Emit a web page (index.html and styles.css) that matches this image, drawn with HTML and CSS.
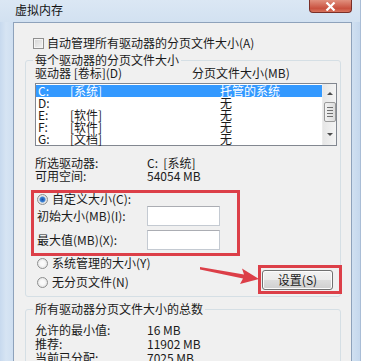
FILE: index.html
```html
<!DOCTYPE html>
<html lang="zh-CN">
<head>
	<meta charset="UTF-8">
	<title>虚拟内存</title>
	<link rel="stylesheet" href="styles.css">
</head>
<body>
	<div id="window">
		<div class="titlebar">
			<span class="title">虚拟内存</span>
			<div class="close">
				<svg width="11" height="9" viewBox="0 0 11 9"><path d="M1.5 0.5 L9.5 8.5 M9.5 0.5 L1.5 8.5" stroke="#fff" stroke-width="2.2"/></svg>
			</div>
		</div>

		<div class="client">
			<div class="auto"><span class="checkbox"></span>自动管理所有驱动器的分页文件大小(A)</div>

			<fieldset class="group">
				<legend>每个驱动器的分页文件大小</legend>
				<div class="cols"><span class="col1">驱动器 [卷标](D)</span><span>分页文件大小(MB)</span></div>

				<div class="listbox">
					<div class="rows">
						<div class="row sel"><span class="drv">C:</span><span class="lbl">[系统]</span><span>托管的系统</span></div>
						<div class="row"><span class="drv">D:</span><span class="lbl"></span><span>无</span></div>
						<div class="row"><span class="drv">E:</span><span class="lbl">[软件]</span><span>无</span></div>
						<div class="row"><span class="drv">F:</span><span class="lbl">[软件]</span><span>无</span></div>
						<div class="row"><span class="drv">G:</span><span class="lbl">[文档]</span><span>无</span></div>
					</div>
					<div class="scrollbar">
						<div class="arrow up"></div>
						<div class="thumb"><i></i><i></i><i></i><i></i></div>
						<div class="arrow down"></div>
					</div>
				</div>

				<div class="info first"><span class="key">所选驱动器:</span><span>C:&nbsp; [系统]</span></div>
				<div class="info"><span class="key">可用空间:</span><span>54054 MB</span></div>

				<div class="radio-row custom"><span class="radio on"></span>自定义大小(C):</div>
				<div class="field first-field"><span class="fkey">初始大小(MB)(I):</span><span class="input"></span></div>
				<div class="field"><span class="fkey">最大值(MB)(X):</span><span class="input"></span></div>

				<div class="options">
					<div class="radios">
						<div class="radio-row"><span class="radio"></span>系统管理的大小(Y)</div>
						<div class="radio-row second"><span class="radio"></span>无分页文件(N)</div>
					</div>
					<div class="button">设置(S)</div>
				</div>
			</fieldset>

			<fieldset class="group total">
				<legend>所有驱动器分页文件大小的总数</legend>
				<div class="info first"><span class="key">允许的最小值:</span><span>16 MB</span></div>
				<div class="info"><span class="key">推荐:</span><span>11902 MB</span></div>
				<div class="info"><span class="key">当前已分配:</span><span>7025 MB</span></div>
			</fieldset>
		</div>
	</div>

	<!-- 标注 -->
	<div class="mark mark-size"></div>
	<div class="mark mark-set"></div>
	<svg class="arrow-mark" width="369" height="361" viewBox="0 0 369 361">
		<polygon points="200,267 244,274.5 242,268.5 259,279 240,284 243,278.5 200,269.5" fill="#dc3f48"/>
	</svg>
</body>
</html>
```

FILE: styles.css
```css
*{
	margin: 0;
	padding: 0;
	box-sizing: border-box;
}
body{
	position: relative;
	width: 369px;
	height: 361px;
	overflow: hidden;
	background-color: #fff;
	font-family: "Noto Sans CJK SC", "Liberation Sans", sans-serif;
	font-size: 12px;
	line-height: 12px;
	color: #1b1b1b;
}
#window{
	width: 361px;
	height: 361px;
	background: linear-gradient(90deg, #c7d9ee 0, #d6e4f3 6px, #cfdff1 13px, #d0e0f1 352px, #c3d6ec 361px);
	border-right: 1px solid #a9bdd6;
}
.titlebar{
	height: 22px;
	display: flex;
	align-items: flex-start;
	background: linear-gradient(#dbe7f4, #d2e1f1);
}
.title{
	margin: 3px 0 0 15px;
	line-height: 14px;
	color: #111;
}
.close{
	margin-left: auto;
	margin-right: 8px;
	width: 43px;
	height: 13px;
	border: 1px solid #7a2f28;
	border-top: none;
	border-radius: 0 0 4px 4px;
	background: linear-gradient(#e1907e, #c9513f 70%, #d8745e);
	display: flex;
	justify-content: center;
	align-items: center;
}
.client{
	margin: 0 8px 0 13px;
	height: 339px;
	background-color: #f0f0f0;
	border: 1px solid #8ea2bb;
	border-bottom: none;
	display: flex;
	flex-direction: column;
}
.auto{
	display: flex;
	align-items: center;
	height: 12px;
	margin: 14px 0 0 19px;
}
.checkbox{
	width: 11px;
	height: 11px;
	margin-right: 3px;
	border: 1px solid #8f8f8f;
	background: linear-gradient(135deg, #d4d4d4, #f4f4f4);
	box-shadow: inset 0 0 0 1px #f4f4f4;
}
.group{
	margin: 5px 10px 0 11px;
	border: 1px solid #d5dfe5;
	border-radius: 3px;
	padding: 0 3px 6px 9px;
	min-width: 0;
}
.group legend{
	padding: 0 2px;
	margin-left: -2px;
	line-height: 12px;
}
.cols{
	display: flex;
	margin-top: 1px;
	height: 12px;
}
.col1{
	width: 157px;
}
.listbox{
	margin-top: 4px;
	height: 63px;
	border: 1px solid #828790;
	background-color: #fff;
	display: flex;
}
.rows{
	flex: 1;
	padding-top: 1px;
}
.row{
	display: flex;
	height: 12px;
	line-height: 12px;
	padding-left: 2px;
}
.row.sel{
	background-color: #3399ff;
	color: #fff;
}
.drv{
	width: 32px;
}
.lbl{
	width: 150px;
}
.scrollbar{
	width: 14px;
	background: linear-gradient(90deg, #e6e6e6, #f4f4f4);
	border-left: 1px solid #ececec;
	display: flex;
	flex-direction: column;
	align-items: center;
}
.arrow{
	width: 0;
	height: 0;
	border-left: 3px solid transparent;
	border-right: 3px solid transparent;
}
.arrow.up{
	margin-top: 8px;
	border-bottom: 3px solid #4d4d4d;
}
.arrow.down{
	margin-top: 11px;
	border-top: 3px solid #4d4d4d;
}
.thumb{
	margin-top: 7px;
	width: 12px;
	height: 20px;
	border: 1px solid #9a9a9a;
	border-radius: 2px;
	background: linear-gradient(90deg, #f2f2f2, #dcdcdc);
	display: flex;
	flex-direction: column;
	align-items: center;
	justify-content: center;
	gap: 2px;
}
.thumb i{
	display: block;
	width: 6px;
	height: 1px;
	background-color: #707070;
}
.info{
	display: flex;
	height: 13px;
	line-height: 13px;
}
.info.first{
	margin-top: 10px;
}
.key{
	width: 112px;
}
.radio-row{
	display: flex;
	align-items: center;
	height: 12px;
	margin-left: 2px;
}
.radio-row.custom{
	margin-top: 11px;
}
.radio-row.second{
	margin-top: 7px;
}
.radio{
	width: 11px;
	height: 11px;
	margin-right: 4px;
	border: 1px solid #8e8f8f;
	border-radius: 50%;
	background: radial-gradient(circle, #fafafa 30%, #d9d9d9 100%);
}
.radio.on{
	background: radial-gradient(circle, #1b4fa8 0, #3f86d6 2.5px, #e8e8e8 3.5px, #d6d6d6 100%);
}
.field{
	display: flex;
	align-items: center;
	height: 20px;
	margin-top: 4px;
	padding-left: 2px;
}
.field.first-field{
	margin-top: 1px;
}
.fkey{
	width: 110px;
}
.input{
	width: 73px;
	height: 20px;
	background-color: #fff;
	border: 1px solid #c4cad2;
	border-top-color: #abadb3;
}
.options{
	display: flex;
	justify-content: space-between;
	margin-top: 7px;
}
.button{
	margin-top: 13px;
	margin-right: 4px;
	width: 71px;
	height: 20px;
	border: 1px solid #707070;
	border-radius: 3px;
	background: linear-gradient(#f2f2f2 0, #ebebeb 50%, #dddddd 51%, #cfcfcf 100%);
	box-shadow: inset 0 0 0 1px #fcfcfc;
	text-align: center;
	line-height: 18px;
}
.group.total{
	margin-top: 6px;
}
.group.total .info.first{
	margin-top: 8px;
}
.group.total .info{
	height: 14px;
	line-height: 14px;
}
.mark{
	position: absolute;
	border: 3px solid #dc3f48;
}
.mark-size{
	left: 31px;
	top: 190px;
	width: 209px;
	height: 66px;
}
.mark-set{
	left: 258px;
	top: 265px;
	width: 84px;
	height: 29px;
}
.arrow-mark{
	position: absolute;
	left: 0;
	top: 0;
}
```
